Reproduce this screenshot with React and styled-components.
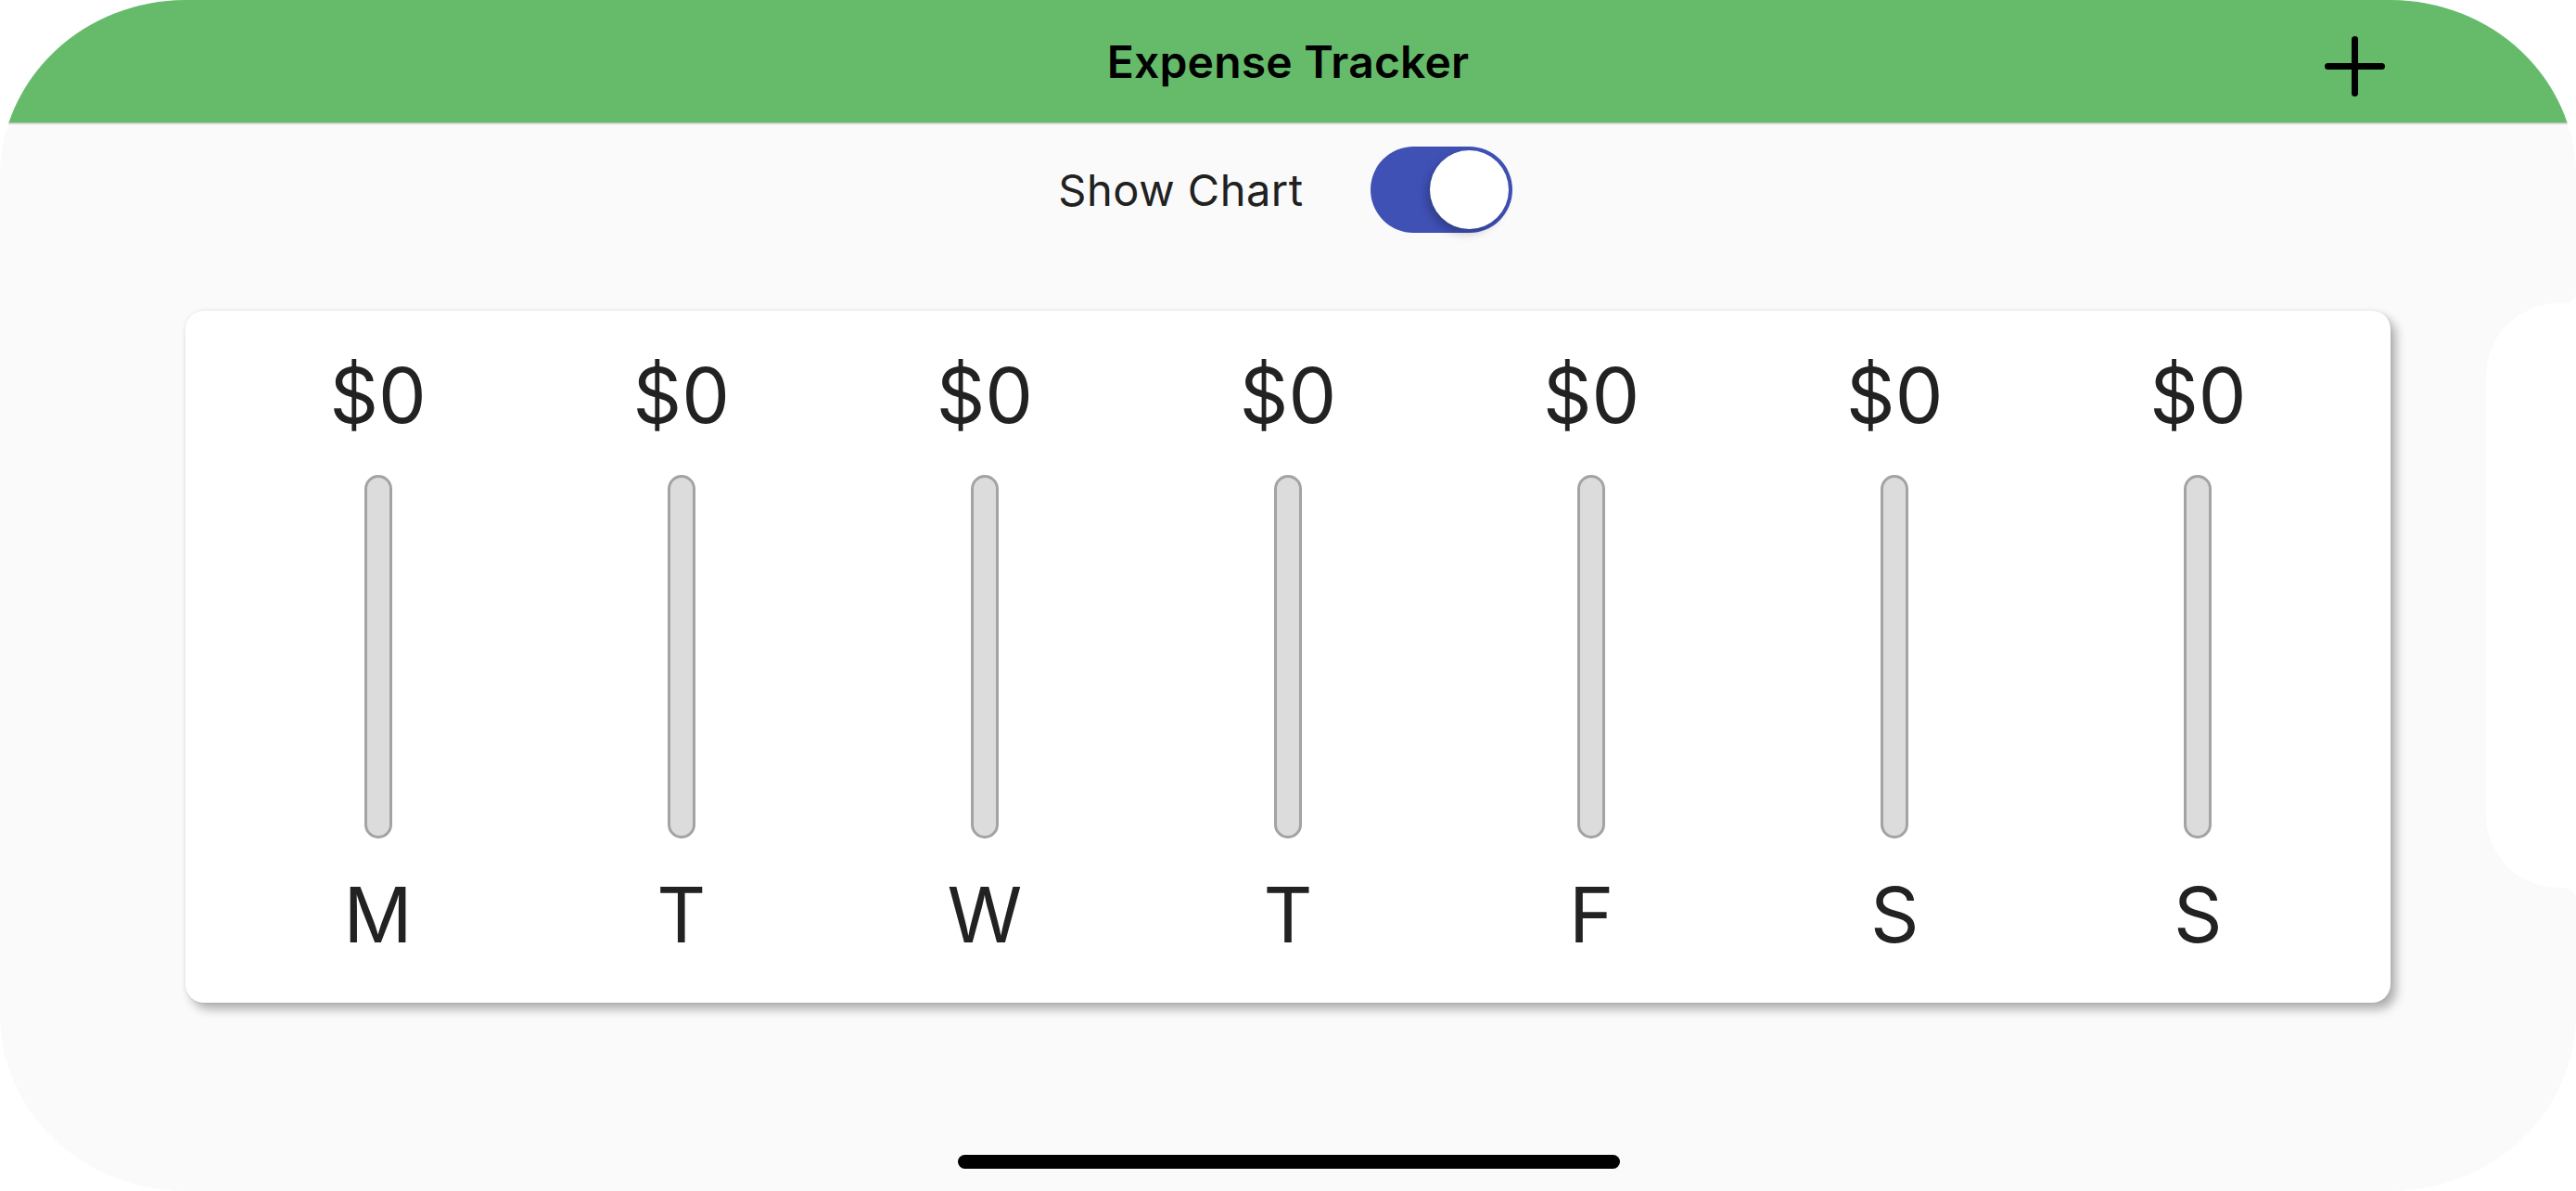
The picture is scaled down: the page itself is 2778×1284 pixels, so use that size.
import React, { useState } from 'react';
import styled, { createGlobalStyle } from 'styled-components';

const GlobalStyle = createGlobalStyle`
  html, body {
    margin: 0;
    padding: 0;
    background: #ffffff;
    overflow: hidden;
  }
  body {
    font-family: Inter, "Noto Sans", sans-serif;
    color: #212121;
  }
`;

const Screen = styled.div`
  position: relative;
  width: 2778px;
  height: 1284px;
  border-radius: 200px / 190px;
  overflow: hidden;
  background: #fafafa;
  display: flex;
  flex-direction: column;
  align-items: center;
`;

const AppBar = styled.header`
  width: 100%;
  height: 132px;
  flex-shrink: 0;
  background: #66bb6a;
  box-shadow: 0 1px 2px rgba(0, 0, 0, 0.35);
  display: grid;
  grid-template-columns: 1fr auto 1fr;
  align-items: center;
  z-index: 1;
`;

const Title = styled.h1`
  grid-column: 2;
  margin: 0;
  font-size: 48px;
  font-weight: 600;
  color: #000;
  letter-spacing: 0.2px;
`;

const AddButton = styled.button`
  grid-column: 3;
  justify-self: end;
  margin-right: 206px;
  padding: 10px 0 0;
  border: none;
  background: none;
  display: flex;
  cursor: pointer;
`;

const ToggleRow = styled.div`
  height: 144px;
  display: flex;
  align-items: center;
  gap: 72px;
  margin-right: 6px;
`;

const ToggleLabel = styled.span`
  font-size: 47px;
  font-weight: 400;
  letter-spacing: 0.5px;
  color: #212121;
`;

const Track = styled.button`
  width: 153px;
  height: 93px;
  box-sizing: border-box;
  padding: 4px;
  border: none;
  border-radius: 47px;
  background: ${(p) => (p.$on ? '#3f51b5' : '#bdbdbd')};
  display: flex;
  justify-content: ${(p) => (p.$on ? 'flex-end' : 'flex-start')};
  align-items: center;
  cursor: pointer;
`;

const Thumb = styled.span`
  width: 85px;
  height: 85px;
  border-radius: 50%;
  background: #fff;
  box-shadow: -4px 5px 10px rgba(0, 0, 0, 0.22);
`;

const ChartCard = styled.section`
  margin-top: 59px;
  width: 2378px;
  box-sizing: border-box;
  padding: 42px 44px 44px;
  background: #fff;
  border-radius: 20px;
  box-shadow: 6px 7px 11px rgba(0, 0, 0, 0.3), 0 0 4px rgba(0, 0, 0, 0.08);
  display: flex;
`;

const DayColumn = styled.div`
  flex: 1;
  display: flex;
  flex-direction: column;
  align-items: center;
`;

const Amount = styled.span`
  font-size: 82px;
  line-height: 100px;
  color: #222;
`;

const BarTrack = styled.div`
  margin: 35px 0 33px;
  width: 30px;
  height: 392px;
  box-sizing: border-box;
  border: 3px solid #a3a3a3;
  border-radius: 15px;
  background: #dcdcdc;
  overflow: hidden;
  display: flex;
  align-items: flex-end;
`;

const BarFill = styled.div`
  width: 100%;
  background: #3f51b5;
`;

const DayLabel = styled.span`
  font-size: 82px;
  line-height: 100px;
  color: #222;
`;

const Notch = styled.div`
  position: absolute;
  right: 0;
  top: 327px;
  width: 97px;
  height: 630px;
  background: #fff;
  border-radius: 78px 0 0 78px;

  &::before,
  &::after {
    content: '';
    position: absolute;
    right: 0;
    width: 12px;
    height: 12px;
  }
  &::before {
    top: -12px;
    background: radial-gradient(circle at 0 0, transparent 11.5px, #fff 12px);
  }
  &::after {
    bottom: -12px;
    background: radial-gradient(circle at 0 100%, transparent 11.5px, #fff 12px);
  }
`;

const HomeIndicator = styled.div`
  position: absolute;
  left: 1033px;
  bottom: 24px;
  width: 714px;
  height: 15px;
  border-radius: 8px;
  background: #000;
`;

const days = [
  { day: 'M', amount: 0 },
  { day: 'T', amount: 0 },
  { day: 'W', amount: 0 },
  { day: 'T', amount: 0 },
  { day: 'F', amount: 0 },
  { day: 'S', amount: 0 },
  { day: 'S', amount: 0 },
];

const PlusIcon = () => (
  <svg width="65" height="65" viewBox="0 0 65 65">
    <g stroke="#000" strokeWidth="7" strokeLinecap="round">
      <line x1="32.5" y1="3.5" x2="32.5" y2="61.5" />
      <line x1="3.5" y1="32.5" x2="61.5" y2="32.5" />
    </g>
  </svg>
);

const App = () => {
  const [showChart, setShowChart] = useState(true);
  const total = days.reduce((s, d) => s + d.amount, 0);

  return (
    <>
      <GlobalStyle />
      <Screen>
        <AppBar>
          <Title>Expense Tracker</Title>
          <AddButton aria-label="Add">
            <PlusIcon />
          </AddButton>
        </AppBar>

        <ToggleRow>
          <ToggleLabel>Show Chart</ToggleLabel>
          <Track $on={showChart} onClick={() => setShowChart(!showChart)}>
            <Thumb />
          </Track>
        </ToggleRow>

        {showChart && (
          <ChartCard>
            {days.map((d, i) => (
              <DayColumn key={i}>
                <Amount>${d.amount.toFixed(0)}</Amount>
                <BarTrack>
                  <BarFill style={{ height: total ? `${(d.amount / total) * 100}%` : '0%' }} />
                </BarTrack>
                <DayLabel>{d.day}</DayLabel>
              </DayColumn>
            ))}
          </ChartCard>
        )}

        <Notch />
        <HomeIndicator />
      </Screen>
    </>
  );
};

export default App;
